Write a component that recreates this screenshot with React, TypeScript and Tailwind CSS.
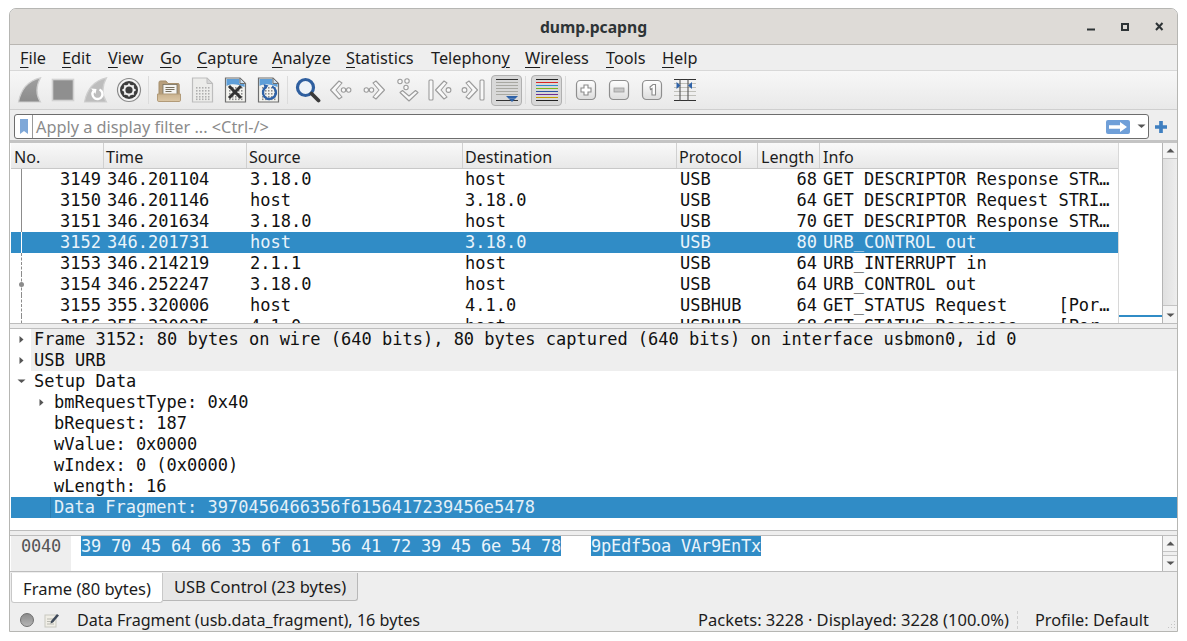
import React from 'react';

const ui = "font-['Noto_Sans',sans-serif]";
const mono = "font-['DejaVu_Sans_Mono',monospace]";

const menus = [
  { pre: '', u: 'F', post: 'ile', w: 'w-[42px]' },
  { pre: '', u: 'E', post: 'dit', w: 'w-[46px]' },
  { pre: '', u: 'V', post: 'iew', w: 'w-[52px]' },
  { pre: '', u: 'G', post: 'o', w: 'w-[37px]' },
  { pre: '', u: 'C', post: 'apture', w: 'w-[75px]' },
  { pre: '', u: 'A', post: 'nalyze', w: 'w-[74px]' },
  { pre: '', u: 'S', post: 'tatistics', w: 'w-[85px]' },
  { pre: 'Telephon', u: 'y', post: '', w: 'w-[94px]' },
  { pre: '', u: 'W', post: 'ireless', w: 'w-[81px]' },
  { pre: '', u: 'T', post: 'ools', w: 'w-[56px]' },
  { pre: '', u: 'H', post: 'elp', w: 'w-[40px]' },
];

const columns = [
  { label: 'No.', w: 'w-[93px]', pl: 'pl-[3px]' },
  { label: 'Time', w: 'w-[143px]', pl: 'pl-[2px]' },
  { label: 'Source', w: 'w-[216px]', pl: 'pl-[2px]' },
  { label: 'Destination', w: 'w-[214px]', pl: 'pl-[2px]' },
  { label: 'Protocol', w: 'w-[81px]', pl: 'pl-[2px]' },
  { label: 'Length', w: 'w-[62px]', pl: 'pl-[3px]' },
  { label: 'Info', w: 'w-[298px]', pl: 'pl-[3px]' },
];

const packets = [
  ['3149', '346.201104', '3.18.0', 'host', 'USB', '68', 'GET DESCRIPTOR Response STR…'],
  ['3150', '346.201146', 'host', '3.18.0', 'USB', '64', 'GET DESCRIPTOR Request STRI…'],
  ['3151', '346.201634', '3.18.0', 'host', 'USB', '70', 'GET DESCRIPTOR Response STR…'],
  ['3152', '346.201731', 'host', '3.18.0', 'USB', '80', 'URB_CONTROL out'],
  ['3153', '346.214219', '2.1.1', 'host', 'USB', '64', 'URB_INTERRUPT in'],
  ['3154', '346.252247', '3.18.0', 'host', 'USB', '64', 'URB_CONTROL out'],
  ['3155', '355.320006', 'host', '4.1.0', 'USBHUB', '64', 'GET_STATUS Request     [Por…'],
  ['3156', '355.320025', '4.1.0', 'host', 'USBHUB', '68', 'GET_STATUS Response    [Por…'],
];

const details = [
  { text: 'Frame 3152: 80 bytes on wire (640 bits), 80 bytes captured (640 bits) on interface usbmon0, id 0', arrow: 'right', depth: 0, tint: true },
  { text: 'USB URB', arrow: 'right', depth: 0, tint: true },
  { text: 'Setup Data', arrow: 'down', depth: 0, tint: false },
  { text: 'bmRequestType: 0x40', arrow: 'right', depth: 1, tint: false },
  { text: 'bRequest: 187', arrow: '', depth: 1, tint: false },
  { text: 'wValue: 0x0000', arrow: '', depth: 1, tint: false },
  { text: 'wIndex: 0 (0x0000)', arrow: '', depth: 1, tint: false },
  { text: 'wLength: 16', arrow: '', depth: 1, tint: false },
];

const Svg = ({ children, size = 26 }: { children: React.ReactNode; size?: number }) => (
  <svg width={size} height={size} viewBox="0 0 26 26" fill="none">{children}</svg>
);

const Defs = () => (
  <svg width="0" height="0" className="absolute">
    <defs>
      <linearGradient id="fin" x1="0" y1="0" x2="0" y2="1">
        <stop offset="0" stopColor="#a0a0a0" />
        <stop offset="1" stopColor="#8c8c8c" />
      </linearGradient>
      <linearGradient id="btn" x1="0" y1="0" x2="0" y2="1">
        <stop offset="0" stopColor="#ffffff" />
        <stop offset="1" stopColor="#dcdcdc" />
      </linearGradient>
      <linearGradient id="folder" x1="0" y1="0" x2="0" y2="1">
        <stop offset="0" stopColor="#c9b28f" />
        <stop offset="1" stopColor="#dcc7a5" />
      </linearGradient>
    </defs>
  </svg>
);

const Fin = ({ restart }: { restart?: boolean }) => (
  <Svg>
    <path d="M1.5 25C3.5 14 10 4 23.5 .8C19 9 19 18 23.5 25Z" fill={restart ? '#bdbdbd' : 'url(#fin)'} stroke="#cfcfcf" strokeWidth="1.2" />
    {restart && <path d="M16.5 12.5a5 5 0 1 1-6 1.5" stroke="#fff" strokeWidth="2.4" />}
    {restart && <path d="M8 11.5l5.5.5-1 5z" fill="#fff" />}
  </Svg>
);

const Stop = () => (
  <Svg>
    <rect x="2.5" y="2.5" width="21" height="21" fill="#8f8f8f" stroke="#d2d2d2" strokeWidth="1.6" />
  </Svg>
);

const Gear = () => (
  <Svg>
    <circle cx="13" cy="13" r="11.5" fill="#f4f4f4" stroke="#8a8a8a" strokeWidth="1.2" />
    <circle cx="13" cy="13" r="9" fill="#3d3d3d" />
    <circle cx="13" cy="13" r="4.6" fill="none" stroke="#f0f0f0" strokeWidth="2" />
    <path d="M13 6.4v2.4M13 17.2v2.4M6.4 13h2.4M17.2 13h2.4M8.3 8.3l1.7 1.7M16 16l1.7 1.7M17.7 8.3L16 10M10 16l-1.7 1.7" stroke="#f0f0f0" strokeWidth="1.8" />
  </Svg>
);

const Folder = () => (
  <Svg>
    <path d="M3 22V5.5C3 4.5 3.5 4 4.5 4H10l2 2.5h10c.8 0 1.2.5 1.2 1.2V22Z" fill="#b79f7d" stroke="#a68f6d" />
    <rect x="7" y="7.5" width="14" height="10" fill="#f4f4f2" stroke="#77705f" strokeWidth="0.8" />
    <path d="M9.5 10.5h9M9.5 12.5h9M9.5 14.5h6" stroke="#77705f" strokeWidth="1" />
    <path d="M1.5 17h23v6.2c0 .8-.5 1.3-1.3 1.3H2.8c-.8 0-1.3-.5-1.3-1.3Z" fill="url(#folder)" stroke="#b29b79" />
  </Svg>
);

const Bits = ({ c }: { c: string }) => (
  <g fill={c}>
    {[10, 13, 16, 19, 21.5].flatMap((y) => [7, 10, 13, 16, 19].map((x) => (
      <rect key={`${x}-${y}`} x={x} y={y} width="1.5" height="1.6" />
    )))}
  </g>
);

const Doc = ({ dim, children }: { dim?: boolean; children?: React.ReactNode }) => (
  <Svg>
    <path d="M3.5 1H18L23.5 6.5V25H3.5Z" fill={dim ? '#ececea' : '#f3f3ef'} stroke={dim ? '#bdbdbd' : '#6f6f6f'} strokeWidth="1.2" />
    {!dim && <path d="M4.5 2h13v5h5v3C16 7 9 6 4.5 9Z" fill="#5f9fd8" />}
    <path d="M18 1V6.5H23.5Z" fill={dim ? '#d6d6d6' : '#cfe0ee'} stroke={dim ? '#bdbdbd' : '#6f6f6f'} />
    <Bits c={dim ? '#aeaeae' : '#8c8c8c'} />
    {children}
  </Svg>
);

const Search = () => (
  <Svg>
    <circle cx="10.5" cy="10.5" r="8" fill="#eef3f8" stroke="#2f5f9f" strokeWidth="3.2" />
    <path d="M16.5 16.5l7 7" stroke="#3a3a3a" strokeWidth="3.8" strokeLinecap="round" />
  </Svg>
);

const chevron = { stroke: '#9c9c9c', fill: '#f8f8f8', strokeWidth: 1.1, strokeLinejoin: 'round' as const };

const Back = () => (
  <Svg>
    <path d="M11 4L2.5 13L11 22L14 20L8 13L14 6Z" {...chevron} />
    <circle cx="15.5" cy="13" r="2.2" {...chevron} />
    <circle cx="20.7" cy="13" r="2.2" {...chevron} />
  </Svg>
);

const Forward = () => (
  <Svg>
    <path d="M15 4L23.5 13L15 22L12 20L18 13L12 6Z" {...chevron} />
    <circle cx="10.5" cy="13" r="2.2" {...chevron} />
    <circle cx="5.3" cy="13" r="2.2" {...chevron} />
  </Svg>
);

const Goto = () => (
  <Svg>
    <path d="M6 15.5L15 24L24 15.5L21.5 13.5L15 19L8.5 13.5Z" {...chevron} />
    <circle cx="6" cy="4.5" r="2.2" {...chevron} />
    <circle cx="13" cy="4" r="2.2" {...chevron} />
    <circle cx="12" cy="10.5" r="2.2" {...chevron} />
  </Svg>
);

const First = () => (
  <Svg>
    <rect x="2" y="3" width="4" height="20" rx="1" {...chevron} />
    <path d="M17 4L8.5 13L17 22L20 20L14 13L20 6Z" {...chevron} />
    <circle cx="21.5" cy="13" r="2.4" {...chevron} />
  </Svg>
);

const Last = () => (
  <Svg>
    <rect x="20" y="3" width="4" height="20" rx="1" {...chevron} />
    <path d="M9 4L17.5 13L9 22L6 20L12 13L6 6Z" {...chevron} />
    <circle cx="4.5" cy="13" r="2.4" {...chevron} />
  </Svg>
);

const Autoscroll = () => (
  <Svg>
    <path d="M2 2.5h22" stroke="#333" strokeWidth="1" />
    <path d="M2 5.5h22M2 8.5h22M2 11.5h22M2 14.5h22M2 17.5h22" stroke="#a8a8a2" strokeWidth="1" />
    <path d="M2 23.5h22" stroke="#333" strokeWidth="1" />
    <path d="M12 19h12l-2.5 2.5h-7z" fill="#2e62a8" />
    <path d="M14.5 21.5h7L18 25z" fill="#2e62a8" />
  </Svg>
);

const colorLines = [
  ['#222222', 2.5],
  ['#d92626', 5.5],
  ['#2a8fd0', 8.5],
  ['#7ab51d', 11.5],
  ['#2c55a5', 14.5],
  ['#6f2c91', 17.5],
  ['#c49a00', 20.5],
  ['#222222', 23.5],
] as const;

const Colorize = () => (
  <Svg>
    {colorLines.map(([c, y]) => (
      <path key={y} d={`M2 ${y}h22`} stroke={c} strokeWidth="1.2" />
    ))}
  </Svg>
);

const ZoomBtn = ({ kind }: { kind: 'in' | 'out' | 'one' }) => (
  <Svg>
    <rect x="3.5" y="3.5" width="19" height="19" rx="4" fill="url(#btn)" stroke="#8e8e8e" strokeWidth="1.2" />
    {kind === 'in' && <path d="M11 8h4v3h3v4h-3v3h-4v-3H8v-4h3Z" fill="#fff" stroke="#8a8a8a" strokeWidth="1.1" />}
    {kind === 'out' && <rect x="8" y="11" width="10" height="4" fill="#c6c6c6" stroke="#9a9a9a" strokeWidth="0.8" />}
    {kind === 'one' && <path d="M11 10l3-2.5h2.5V18H13V11.5l-1.5 1Z" fill="#fff" stroke="#8a8a8a" strokeWidth="1.1" />}
  </Svg>
);

const Resize = () => (
  <Svg>
    <path d="M2 2.5h22M2 23.5h22" stroke="#333" strokeWidth="1" />
    <path d="M2 6.5h22M2 10.5h22M2 14.5h22M2 18.5h22" stroke="#c0c0ba" strokeWidth="1" />
    <path d="M8 2.5v21M16 2.5v21" stroke="#555" strokeWidth="1.1" />
    <path d="M4.5 5l4 3.5-4 3.5Z" fill="#2e62a8" />
    <path d="M20 5l-4 3.5 4 3.5Z" fill="#2e62a8" />
  </Svg>
);

const Tool = ({ children }: { children: React.ReactNode }) => (
  <div className="flex h-[32px] w-[33px] items-center justify-center">{children}</div>
);

const Toggled = ({ children }: { children: React.ReactNode }) => (
  <div className="ml-[2px] flex h-[31px] w-[31px] items-center justify-center rounded-[4px] border border-[#b0b0b0] bg-[#d8d8d8]">{children}</div>
);

const Sep = () => (
  <div className="flex h-[28px] w-[7px] justify-center">
    <div className="h-full w-px bg-[#dcdcdc]" />
  </div>
);

const Arrow = ({ dir, color = '#555' }: { dir: string; color?: string }) => (
  <svg width="9" height="9" viewBox="0 0 9 9">
    {dir === 'right' && <path d="M2.5 1l4 3.5-4 3.5z" fill={color} />}
    {dir === 'down' && <path d="M.5 2.5h8L4.5 6z" fill={color} />}
    {dir === 'up' && <path d="M.5 6.5h8L4.5 2.5z" fill={color} />}
  </svg>
);

const ScrollBtn = ({ dir, h = 'h-[15px]' }: { dir: string; h?: string }) => (
  <div className={`flex ${h} shrink-0 items-center justify-center bg-[#f4f4f4]`}>
    <Arrow dir={dir} color="#555" />
  </div>
);

export default function App() {
  return (
    <div className={`h-[641px] w-[1187px] overflow-hidden bg-white pl-[9px] pt-[8px] ${ui} text-[16px] text-[#1c1c1c]`}>
      <Defs />
      <div className="flex h-[624px] w-[1169px] flex-col overflow-hidden rounded-t-[7px] border border-[#b6b6b3] bg-[#eeeeee]">
        {/* title bar */}
        <div className="flex h-[36px] shrink-0 items-center border-b border-[#b9b6b2] bg-[#dedbd7]">
          <div className="w-[90px]" />
          <div className="flex-1 pt-[2px] text-center text-[15.7px] font-bold text-[#2e3436]">dump.pcapng</div>
          <div className="flex w-[90px] items-center">
            <svg width="90" height="16" viewBox="0 0 90 16">
              <path d="M0 10.5h8" stroke="#2e3436" strokeWidth="2" />
              <rect x="35" y="5" width="6" height="6" fill="none" stroke="#2e3436" strokeWidth="2" />
              <path d="M69 4l6.5 7M75.5 4L69 11" stroke="#2e3436" strokeWidth="2" />
            </svg>
          </div>
        </div>

        {/* menu */}
        <div className="flex h-[26px] shrink-0 items-center border-b border-[#d8d8d8] pl-[10px] pt-px text-[16.3px]">
          {menus.map((m) => (
            <div key={m.pre + m.u} className={m.w}>
              {m.pre}<span className="underline underline-offset-[3px]">{m.u}</span>{m.post}
            </div>
          ))}
        </div>

        {/* toolbar */}
        <div className="flex h-[39px] shrink-0 items-center border-b border-[#cfcfcf] bg-gradient-to-b from-[#f7f7f7] to-[#e9e9e9] pl-[3px]">
          <Tool><Fin /></Tool>
          <Tool><Stop /></Tool>
          <Tool><Fin restart /></Tool>
          <Tool><Gear /></Tool>
          <Sep />
          <Tool><Folder /></Tool>
          <Tool><Doc dim /></Tool>
          <Tool>
            <Doc><path d="M7 9l12 12M19 9L7 21" stroke="#333" strokeWidth="3" /></Doc>
          </Tool>
          <Tool>
            <Doc>
              <path d="M17 9.5a6.5 6.5 0 1 1-5.5 .2" stroke="#2e62a8" strokeWidth="2.4" />
              <path d="M8.5 7l5 1.5-3.5 4z" fill="#2e62a8" />
            </Doc>
          </Tool>
          <Sep />
          <Tool><Search /></Tool>
          <Tool><Back /></Tool>
          <Tool><Forward /></Tool>
          <Tool><Goto /></Tool>
          <Tool><First /></Tool>
          <Tool><Last /></Tool>
          <Toggled><Autoscroll /></Toggled>
          <Sep />
          <Toggled><Colorize /></Toggled>
          <Sep />
          <Tool><ZoomBtn kind="in" /></Tool>
          <Tool><ZoomBtn kind="out" /></Tool>
          <Tool><ZoomBtn kind="one" /></Tool>
          <Tool><Resize /></Tool>
        </div>

        {/* display filter */}
        <div className="flex h-[33px] shrink-0 items-center border-b-[3px] border-[#c4c4c4] pl-[4px] pt-[3px]">
          <div className="flex h-[25px] w-[1135px] items-center rounded-[3px] border border-[#6d6d6d] bg-white">
            <div className="flex h-full w-[18px] items-center justify-center border-r border-[#9a9a9a]">
              <svg width="8" height="15" viewBox="0 0 8 15"><path d="M0 0h8v15L4 12 0 15z" fill="#7fa8d8" /></svg>
            </div>
            <span className="flex-1 pl-[3px] pt-[2px] text-[16.3px] text-[#8b8b8b]">Apply a display filter ... &lt;Ctrl-/&gt;</span>
            <div className="flex h-[14px] w-[24px] items-center justify-center rounded-[2px] bg-[#6f9fd8]">
              <svg width="20" height="10" viewBox="0 0 20 10"><path d="M1 3.2h11V0l7 5-7 5V6.8H1z" fill="#fff" /></svg>
            </div>
            <div className="flex w-[18px] justify-center pl-[4px]"><Arrow dir="down" /></div>
          </div>
          <div className="flex w-[24px] justify-center">
            <svg width="12" height="12" viewBox="0 0 13 13"><path d="M4.5 0h4v4.5H13v4H8.5V13h-4V8.5H0v-4h4.5z" fill="#3f7fc0" /></svg>
          </div>
        </div>

        {/* packet list */}
        <div className="flex h-[181px] shrink-0 border-b border-[#bdbdbd] bg-white pl-px">
          <div className="flex w-[1107px] flex-col overflow-hidden">
            <div className="flex h-[26px] shrink-0 items-center border-b border-[#c8c8c8] bg-gradient-to-b from-[#f9f9f9] to-[#e8e8e8] text-[16.1px]">
              {columns.map((c) => (
                <div key={c.label} className={`${c.w} ${c.pl} h-full border-r border-[#d0d0d0] leading-[28px] last:border-r-0`}>{c.label}</div>
              ))}
            </div>
            {packets.map((p, i) => {
              const selected = i === 3;
              return (
                <div key={p[0]} className={`flex h-[21px] shrink-0 whitespace-pre text-[17px] leading-[21px] ${mono} ${selected ? 'bg-[#308cc6] text-[#eaf4fb]' : 'text-[#111]'}`}>
                  <div className="flex w-[93px]">
                    <div className={`relative h-full w-[11px] shrink-0 border-r ${selected ? 'border-white' : i > 3 ? 'border-dashed border-[#8c8c8c]' : 'border-[#8c8c8c]'}`}>
                      {i === 5 && <div className="absolute right-[-3px] top-[8px] h-[5px] w-[5px] rounded-full bg-[#8c8c8c]" />}
                    </div>
                    <div className="flex-1 pr-[3px] text-right">{p[0]}</div>
                  </div>
                  <div className="w-[143px] pl-[3px]">{p[1]}</div>
                  <div className="w-[216px] pl-[3px]">{p[2]}</div>
                  <div className="w-[214px] pl-[2px]">{p[3]}</div>
                  <div className="w-[81px] pl-[3px]">{p[4]}</div>
                  <div className="w-[62px] pr-[3px] text-right">{p[5]}</div>
                  <div className="w-[298px] pl-[3px]">{p[6]}</div>
                </div>
              );
            })}
          </div>
          {/* minimap */}
          <div className="flex w-[44px] flex-col border-l border-[#d8d8d8] pb-[6px]">
            <div className="flex-1" />
            <div className="h-[2px] bg-[#308cc6]" />
          </div>
          {/* scrollbar */}
          <div className="flex w-[15px] flex-col border-l border-[#b4b4b4]">
            <ScrollBtn dir="up" />
            <div className="flex-1 border-y border-[#c4c4c4] bg-gradient-to-r from-[#e0e0e0] to-[#ededed]" />
            <div className="h-[2px] bg-[#f4f4f4]" />
            <ScrollBtn dir="down" />
          </div>
        </div>

        <div className="h-[5px] shrink-0 border-b border-[#bdbdbd] bg-[#eeeeee]" />

        {/* packet details */}
        <div className={`h-[201px] shrink-0 overflow-hidden bg-white pl-px text-[17px] leading-[21px] ${mono} text-[#111]`}>
          {details.map((d) => (
            <div key={d.text} className="flex h-[21px] whitespace-pre">
              <div className="flex w-[20px] shrink-0 items-center justify-center">
                {d.depth === 0 && d.arrow && <Arrow dir={d.arrow} />}
              </div>
              <div className={`flex flex-1 ${d.tint ? 'bg-[#eeeeee]' : ''}`}>
                {d.depth === 1 && (
                  <div className="flex w-[20px] shrink-0 items-center justify-center">
                    {d.arrow && <Arrow dir={d.arrow} />}
                  </div>
                )}
                <span className="pl-[3px]">{d.text}</span>
              </div>
            </div>
          ))}
          <div className="flex h-[21px] whitespace-pre bg-[#308cc6] text-[#e4f0f8]">
            <div className="w-[40px] shrink-0 border-r border-[#2a7cb0]" />
            <span className="pl-[3px]">Data Fragment: 3970456466356f6156417239456e5478</span>
          </div>
        </div>

        <div className="h-[6px] shrink-0 border-y border-[#bdbdbd] bg-[#eeeeee]" />

        {/* hex */}
        <div className={`flex h-[36px] shrink-0 border-b border-[#bdbdbd] bg-white pl-px text-[17px] leading-[21px] tracking-[-0.234px] ${mono}`}>
          <div className="w-[60px] shrink-0 bg-[#eeeeee] pl-[10px] text-[#555]">0040</div>
          <div className="flex-1 whitespace-pre pl-[10px]">
            <span className="bg-[#308cc6] text-[#eaf4fb]">39 70 45 64 66 35 6f 61  56 41 72 39 45 6e 54 78</span>
            <span>   </span>
            <span className="bg-[#308cc6] text-[#eaf4fb]">9pEdf5oa VAr9EnTx</span>
          </div>
          <div className="flex w-[15px] shrink-0 flex-col border-l border-[#b4b4b4]">
            <ScrollBtn dir="up" />
            <div className="flex-1 border-y border-[#c4c4c4] bg-[#efefef]" />
            <ScrollBtn dir="down" />
          </div>
        </div>

        {/* byte view tabs */}
        <div className="mt-px flex h-[30px] shrink-0 items-start pl-px text-[16.5px]">
          <div className="flex h-[30px] w-[152px] items-center justify-center rounded-b-[3px] border-x border-b border-[#c8c8c8] bg-white pt-[3px]">Frame (80 bytes)</div>
          <div className="flex h-[28px] w-[195px] items-center justify-center rounded-br-[3px] border-r border-b border-[#b8b8b8] bg-[#e6e6e6] pt-[2px]">USB Control (23 bytes)</div>
        </div>

        {/* status bar */}
        <div className="flex flex-1 items-center pl-[10px] pt-[5px]">
          <div className="h-[14px] w-[14px] rounded-full border border-[#6e6e6e] bg-gradient-to-b from-[#8c8c8c] to-[#b4b4b4]" />
          <div className="ml-[10px] w-[33px]">
            <svg width="15" height="15" viewBox="0 0 15 15">
              <rect x="1" y="2" width="11" height="12" fill="#f0eee6" stroke="#c8c8c0" />
              <path d="M3 6h7M3 8.5h7M3 11h7" stroke="#b8b8b0" />
              <path d="M7 8l6-7 2 1.5-6 7-2.5 1z" fill="#3f4a5a" />
            </svg>
          </div>
          <div className="w-[621px] text-[16.15px]">Data Fragment (usb.data_fragment), 16 bytes</div>
          <div className="w-[319px] text-[16.5px]">Packets: 3228 · Displayed: 3228 (100.0%)</div>
          <div className="h-[18px] w-[18px] border-l border-dashed border-[#cfcfcf]" />
          <div className="flex-1 text-[16.3px]">Profile: Default</div>
          <svg width="11" height="11" viewBox="0 0 11 11" className="mb-[-8px] self-center">
            <g fill="#c4c4c4">
              <rect x="8" y="2" width="1" height="1" />
              <rect x="5" y="5" width="1" height="1" />
              <rect x="8" y="5" width="1" height="1" />
              <rect x="2" y="8" width="1" height="1" />
              <rect x="5" y="8" width="1" height="1" />
              <rect x="8" y="8" width="1" height="1" />
            </g>
          </svg>
        </div>
      </div>
    </div>
  );
}
